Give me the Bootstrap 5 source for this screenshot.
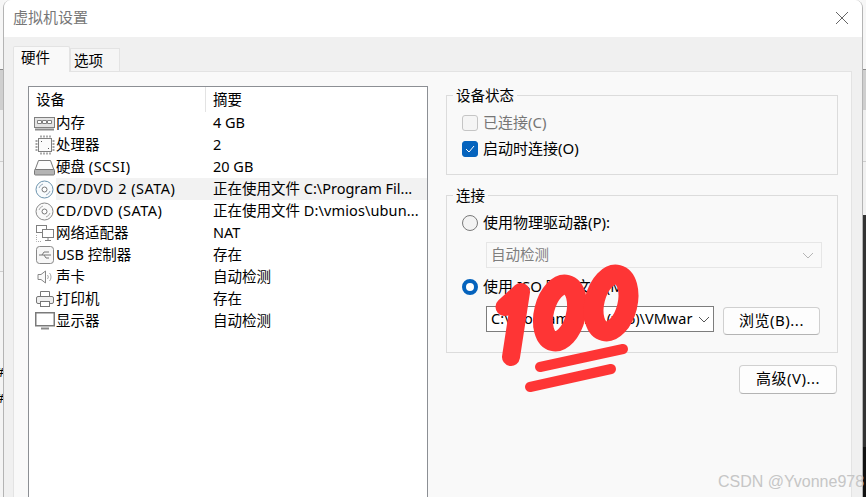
<!DOCTYPE html>
<html lang="zh"><head><meta charset="utf-8">
<link href="https://cdn.jsdelivr.net/npm/bootstrap@5.3.0/dist/css/bootstrap.min.css" rel="stylesheet">
<style>
html,body{height:497px;overflow:hidden;margin:0;background:#f7f7f7}
body{font-family:"Noto Sans","Noto Sans CJK SC",sans-serif;font-size:14.5px;line-height:22px;color:#000}
.stage{position:relative;width:866px;height:497px;overflow:hidden}
.wall{flex:none;overflow:hidden;position:relative;background:#f4f4f4}
.wall.lft{width:3px}
.wall.rgt{width:3px}
.wl-gap70{height:69px;background:#f6f6f6}
.wl-line{height:1px;background:#8a8a8a}
.wl-band{height:40px;background:#cfcfcf}
.wl-a{height:51px;background:#efefef}
.wl-thin{height:1px;background:#cdcdcd}
.wl-b{height:109px;background:#f1f1f1}
.wl-c{height:53px;background:#f1f1f1}
.wl-dark{height:232px;background:#333}
.wl-black{height:50px;background:#111}
.wall-hash{position:absolute;left:-4px;font-size:13px;line-height:14px}
.hash1{top:365px}.hash2{top:391px}
.vmwin{width:860px;flex:none;border-left:1px solid #b4b4b4;border-right:1px solid #b4b4b4;border-radius:8px 8px 0 0;height:497px;display:flex;flex-direction:column;background:#f0f0f0;overflow:hidden}
.titlebar{height:37px;background:#fff;padding:6px 0 0 9px;color:#777;justify-content:space-between;font-size:15px}
.closex{margin:5px 13px 0 0}
.tabrow{height:34px;padding:9px 0 0 9px;align-items:flex-end}
.tabx{border:1px solid #e3e3e3;border-bottom:0;background:#f5f5f5}
.tabx.on{width:57px;height:26px;background:#f9f9f9;line-height:20px;padding-left:7px;margin-bottom:-1px;position:relative;z-index:1;border-radius:2px 2px 0 0}
.tabx.off{width:50px;height:23px;line-height:23px;padding-left:3px}
.panel{flex:1;margin:0 10px 0 9px;background:#f9f9f9;border:1px solid #e3e3e3;border-bottom:0;padding:14px 14px 0 14px;gap:18px;min-height:0}
.devlist{width:400px;height:420px;background:#fff;border:1px solid #8c8f94;flex:none;overflow:hidden}
.devhead{height:25px;line-height:25px}
.hcell1{width:177px;padding-left:7px;border-right:1px solid #e3e3e3;flex:none}
.hcell2{padding-left:7px}
.devrow{height:22px;line-height:20px}
.devicon{width:27px;flex:none;display:flex;justify-content:center;padding-left:4px;padding-right:0;align-items:center}
.devname{width:150px;flex:none;white-space:nowrap}
.latn{letter-spacing:.5px}
.latn2{letter-spacing:.12px}
.devrow.sel .devname,.devrow.sel .devsum{background:#f2f2f2}
.devsum{flex:1;padding-left:7px;white-space:nowrap;overflow:hidden}
.rightcol{width:392px;flex:none;padding-top:9px;font-size:15px}
.groupx{position:relative;border:1px solid #dcdcdc;padding:14px 15px 0 15px}
.groupx.first{height:80px}
.groupx.second{height:158px;margin-top:20px}
.legendx{position:absolute;left:6px;top:-12px;background:#f9f9f9;padding:0 3px;line-height:22px;font-size:14.5px}
.optrow{height:26px;gap:5px}
.optlabel{margin-top:-2px}
.boxc{width:16px;height:16px;border-radius:3px;border:1px solid #c5c5c5;background:#f5f5f5;flex:none}
.boxc.on{background:#0563bd;border-color:#0563bd;display:flex;align-items:center;justify-content:center}
.radx{width:16px;height:16px;border-radius:50%;border:1px solid #7a7a7a;background:#f3f3f3;flex:none}
.radx.on{border:4.5px solid #0563bd;background:#fff}
.muted{color:#767676}
.combo{border:1px solid #c8c8c8;height:26px;line-height:22px;padding:0 3px 0 4px;justify-content:space-between;overflow:hidden;font-size:14.5px}
.combo.dis{width:336px;margin:6px 0 6px 24px;background:#f9f9f9;border-color:#e6e6e6;color:#7e7e7e}
.combo.live{width:228px;border-color:#7d7d7d;background:#fff;flex:none;white-space:nowrap}
.arrow{flex:none;margin:0 0 0 6px}
.isorow{margin:6px 0 0 24px;gap:9px;align-items:flex-start}
.winbtn{background:#fdfdfd;border:1px solid #d0d0d0;border-bottom-color:#b4b4b4;border-radius:4px;text-align:center;line-height:24px;height:28px;flex:none;letter-spacing:.5px}
.btnb{width:97px;margin-top:1px}
.btnv{width:98px;height:29px;margin:12px 1px 0 auto}
.hundred{position:absolute;left:490px;top:255px}
.wm{position:absolute;left:718px;top:472px;font-family:"Liberation Sans",sans-serif;font-size:16px;color:#c6c6c6;white-space:nowrap;line-height:20px}
</style></head><body>
<div class="stage d-flex">
<div class="wall lft"><div class="wl-gap70"></div><div class="wl-line"></div><div class="wl-band"></div><div class="wl-a"></div><div class="wl-thin"></div><div class="wl-b"></div><div class="wl-thin"></div><span class="wall-hash hash1">#</span><span class="wall-hash hash2">#</span></div>
<div class="vmwin">
<div class="titlebar d-flex"><span>虚拟机设置</span>
<svg class="closex" width="14" height="14" viewBox="0 0 14 14"><path d="M1 1l12 12M13 1L1 13" stroke="#666" stroke-width="1" fill="none"/></svg></div>
<div class="tabrow d-flex"><div class="tabx on">硬件</div><div class="tabx off">选项</div></div>
<div class="panel d-flex">
<div class="devlist">
<div class="devhead d-flex"><div class="hcell1">设备</div><div class="hcell2">摘要</div></div>
<div class="devrow d-flex"><div class="devicon"><svg width="21" height="15" viewBox="0 0 21 15"><rect x=".5" y="1.500" width="20" height="10" fill="#e4e4e4" stroke="#808080"/><path d="M3.500 4.500h4v3h-4zM8.500 4.500h4v3h-4zM13.500 4.500h4v3h-4z" fill="#fff" stroke="#808080"/><path d="M1 13.500h19" stroke="#8a8a8a" stroke-width="2"/></svg></div><div class="devname">内存</div><div class="devsum">4 GB</div></div>
<div class="devrow d-flex"><div class="devicon"><svg width="20" height="20" viewBox="0 0 20 20"><rect x="3.500" y="3.500" width="13" height="13" fill="#fbfbfb" stroke="#808080"/><path d="M6 .5v2M9 .5v2M12 .5v2M15 .5v2M6 17.500v2M9 17.500v2M12 17.500v2M15 17.500v2M.5 6h2M.5 9h2M.5 12h2M.5 15h2M17.500 6h2M17.500 9h2M17.500 12h2M17.500 15h2" stroke="#888" stroke-width="1.400"/><path d="M6 6h1v1H6zM13 13h1v1h-1z" fill="#555"/></svg></div><div class="devname">处理器</div><div class="devsum">2</div></div>
<div class="devrow d-flex"><div class="devicon"><svg width="21" height="17" viewBox="0 0 21 17"><path d="M4.500 1.500h12l3.500 9.500H1z" fill="#fbfbfb" stroke="#7a7a7a"/><rect x=".5" y="10.500" width="20" height="5.500" rx="1" fill="#b4b4b4" stroke="#7a7a7a"/></svg></div><div class="devname">硬盘 <span class="latn">(SCSI)</span></div><div class="devsum">20 GB</div></div>
<div class="devrow sel d-flex"><div class="devicon"><svg width="19" height="19" viewBox="0 0 19 19"><circle cx="9.500" cy="9.500" r="8.500" fill="#f8fbfd" stroke="#6c93ad"/><circle cx="9.500" cy="9.500" r="2.500" fill="#fff" stroke="#777"/><path d="M4 8a6 6 0 0 1 4-4M15 11a6 6 0 0 1-4 4" stroke="#9ab" fill="none"/></svg></div><div class="devname latn">CD/DVD 2 (SATA)</div><div class="devsum">正在使用文件 C:\Program Fil...</div></div>
<div class="devrow d-flex"><div class="devicon"><svg width="19" height="19" viewBox="0 0 19 19"><circle cx="9.500" cy="9.500" r="8.500" fill="#fafafa" stroke="#888"/><circle cx="9.500" cy="9.500" r="2.500" fill="#fff" stroke="#777"/><path d="M4 8a6 6 0 0 1 4-4M15 11a6 6 0 0 1-4 4" stroke="#aaa" fill="none"/></svg></div><div class="devname latn">CD/DVD (SATA)</div><div class="devsum">正在使用文件 <span class="latn2">D:\vmios\ubun...</span></div></div>
<div class="devrow d-flex"><div class="devicon"><svg width="19" height="19" viewBox="0 0 19 19"><rect x="1.500" y="1.500" width="10" height="7" fill="#fff" stroke="#808080"/><rect x="7.500" y="5.500" width="11" height="8" fill="#fff" stroke="#808080"/><path d="M13 13.500v3M10 16.500h6" stroke="#808080"/><path d="M1.500 11v6.500h5" stroke="#aaa" stroke-dasharray="1 1" fill="none"/></svg></div><div class="devname">网络适配器</div><div class="devsum">NAT</div></div>
<div class="devrow d-flex"><div class="devicon"><svg width="18" height="18" viewBox="0 0 18 18"><rect x=".5" y=".5" width="17" height="17" rx="3" fill="#f7f7f7" stroke="#888"/><path d="M3 9h12M6 9l2-3h5M8 9l2 3h3" stroke="#777" fill="none"/></svg></div><div class="devname">USB 控制器</div><div class="devsum">存在</div></div>
<div class="devrow d-flex"><div class="devicon"><svg width="16" height="16" viewBox="0 0 16 16"><path d="M1 5.500h3L8.500 2v12L4 10.500H1z" fill="#fafafa" stroke="#888"/><path d="M10.500 6a3 3 0 0 1 0 4M12.500 4a6 6 0 0 1 0 8" stroke="#aaa" fill="none"/></svg></div><div class="devname">声卡</div><div class="devsum">自动检测</div></div>
<div class="devrow d-flex"><div class="devicon"><svg width="18" height="18" viewBox="0 0 18 18"><path d="M4.500 6V1.500h9V6" fill="#fff" stroke="#777"/><rect x=".5" y="6.500" width="17" height="7" rx="1.500" fill="#efefef" stroke="#777"/><rect x="4.500" y="11.500" width="9" height="5" fill="#fff" stroke="#777"/></svg></div><div class="devname">打印机</div><div class="devsum">存在</div></div>
<div class="devrow d-flex"><div class="devicon"><svg width="20" height="18" viewBox="0 0 20 18"><rect x=".75" y=".75" width="18.500" height="13" fill="#fff" stroke="#7a7a7a" stroke-width="1.500"/><path d="M6 16.500h8" stroke="#8a8a8a" stroke-width="2"/></svg></div><div class="devname">显示器</div><div class="devsum">自动检测</div></div>
</div>
<div class="rightcol">
<div class="groupx first"><span class="legendx">设备状态</span>
<div class="optrow d-flex align-items-center muted"><span class="boxc"></span><span class="optlabel">已连接(C)</span></div>
<div class="optrow d-flex align-items-center"><span class="boxc on"><svg width="10" height="8" viewBox="0 0 10 8"><path d="M1 4l3 3 5-6" stroke="#fff" fill="none"/></svg></span><span class="optlabel">启动时连接(O)</span></div>
</div>
<div class="groupx second"><span class="legendx">连接</span>
<div class="optrow d-flex align-items-center"><span class="radx"></span><span class="optlabel">使用物理驱动器(P):</span></div>
<div class="combo dis d-flex align-items-center"><span class="optlabel">自动检测</span><svg class="arrow me-1" width="12" height="7" viewBox="0 0 12 7"><path d="M1 1l5 5 5-5" stroke="#b5b5b5" fill="none"/></svg></div>
<div class="optrow d-flex align-items-center"><span class="radx on"></span><span class="optlabel">使用 ISO 映像文件(M):</span></div>
<div class="isorow d-flex"><div class="combo live d-flex align-items-center"><span class="optlabel">C:\Program Files (x86)\VMwar</span><svg class="arrow" width="12" height="7" viewBox="0 0 12 7"><path d="M1 1l5 5 5-5" stroke="#555" fill="none"/></svg></div><div class="winbtn btnb">浏览(B)...</div></div>
</div>
<div class="winbtn btnv">高级(V)...</div>
</div>
</div>
</div>
<div class="wall rgt"><div class="wl-gap70"></div><div class="wl-line"></div><div class="wl-band"></div><div class="wl-a"></div><div class="wl-thin"></div><div class="wl-c"></div><div class="wl-dark"></div><div class="wl-black"></div></div>
<svg class="hundred" width="160" height="150" viewBox="490 255 160 150"><g fill="none" stroke="#fe3535" stroke-linecap="round" stroke-linejoin="round"><path d="M504.500 307L521 292L511 357" stroke-width="18"/><ellipse cx="560" cy="313" rx="16" ry="29" stroke-width="20" transform="rotate(14 560 313)"/><ellipse cx="611" cy="303" rx="16.500" ry="29" stroke-width="20" transform="rotate(14 611 303)"/><path d="M540 367L623 349M530 387L611 369" stroke-width="10"/></g></svg>
<span class="wm">CSDN @Yvonne978</span>
</div>
</body></html>
